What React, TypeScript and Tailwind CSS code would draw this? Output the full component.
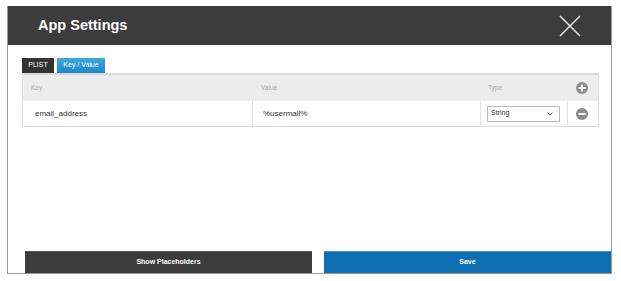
import React from "react";

const font = { fontFamily: '"Liberation Sans", Arial, sans-serif' };

function CircleIcon({ minus }: { minus?: boolean }) {
  return (
    <svg width="12" height="12" viewBox="0 0 12 12">
      <circle cx="6" cy="6" r="6" fill="#8c8c8c" />
      <rect x="2.5" y="5" width="7" height="2" fill="#fff" />
      {!minus && <rect x="5" y="2.5" width="2" height="7" fill="#fff" />}
    </svg>
  );
}

export default function App() {
  return (
    <div className="w-[621px] h-[281px] bg-white pt-[6px] pl-[7px]" style={font}>
      <div className="w-[605px] h-[268px] border-x border-b border-[#9b9b9b] flex flex-col">
        <div className="h-[39px] bg-[#3c3c3c] flex items-center justify-between pl-[30px] pr-[30px]">
          <span className="text-white font-bold text-[14.5px] leading-none">App Settings</span>
          <svg width="22" height="22" viewBox="0 0 22 22">
            <path d="M1 1 L21 21 M21 1 L1 21" stroke="#f2f2f2" strokeWidth="1.4" fill="none" />
          </svg>
        </div>
        <div className="flex-1 flex flex-col">
          <div className="pt-[13px] pl-[14px] pr-[12px]">
            <div className="flex gap-[3px]">
              <div className="h-[15px] w-[32px] bg-[#333333] text-white text-[7px] flex items-center justify-center">PLIST</div>
              <div className="h-[15px] w-[48px] bg-gradient-to-b from-[#3fa6de] to-[#1f88c9] text-white text-[7px] flex items-center justify-center">Key / Value</div>
            </div>
            <div className="border-t-2 border-[#d9d9d9] border-x border-b border-x-[#e0e0e0] border-b-[#dcdcdc]">
              <div className="grid grid-cols-[230px_228px_87px_1fr] h-[26px] bg-[#ececec] text-[6.5px] text-[#a8a8a8] items-center">
                <div className="pl-[8px]">Key</div>
                <div className="pl-[8px]">Value</div>
                <div className="pl-[7px]">Type</div>
                <div className="flex justify-center pr-[2px]"><CircleIcon /></div>
              </div>
              <div className="grid grid-cols-[230px_228px_87px_1fr] h-[25px] bg-white text-[8px] text-[#333] items-stretch">
                <div className="pl-[12px] flex items-center border-r border-[#e2e2e2]">email_address</div>
                <div className="pl-[10px] flex items-center border-r border-[#e2e2e2]">%usermail%</div>
                <div className="pl-[6px] flex items-center border-r border-[#e2e2e2]">
                  <div className="w-[73px] h-[16px] border border-[#b9b9b9] bg-white flex items-center justify-between pl-[3px] pr-[6px] text-[7px]">
                    <span>String</span>
                    <svg width="6" height="4" viewBox="0 0 6 4">
                      <path d="M0.5 0.5 L3 3 L5.5 0.5" stroke="#666" strokeWidth="0.9" fill="none" />
                    </svg>
                  </div>
                </div>
                <div className="flex items-center justify-center pr-[2px]"><CircleIcon minus /></div>
              </div>
            </div>
          </div>
          <div className="flex-1" />
          <div className="flex h-[22px] pl-[17px] gap-[12px]">
            <div className="w-[287px] bg-[#3c3c3c] border-t border-[#555] text-white font-bold text-[7px] flex items-center justify-center">Show Placeholders</div>
            <div className="flex-1 bg-[#0f6fb3] border-t border-[#4c92c9] text-white font-bold text-[7px] flex items-center justify-center">Save</div>
          </div>
        </div>
      </div>
    </div>
  );
}
